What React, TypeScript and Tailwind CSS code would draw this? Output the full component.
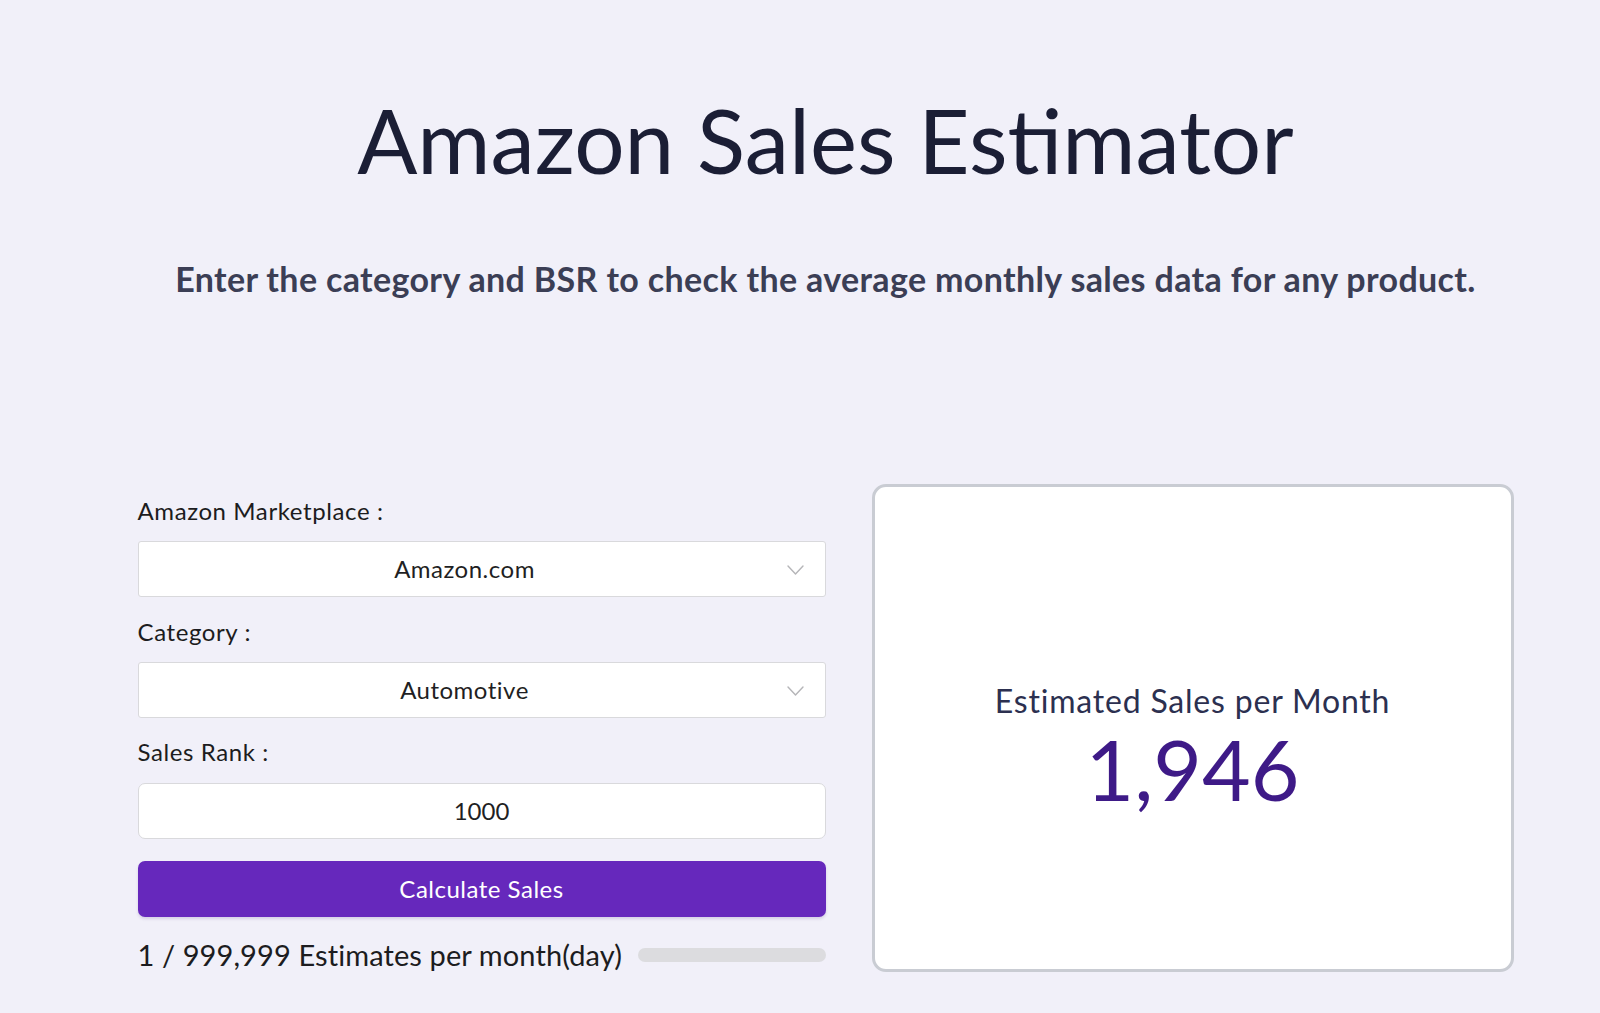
import React from "react";

const font = { fontFamily: "Lato, 'Open Sans', sans-serif" };

function Chevron() {
  return (
    <svg width="17" height="10" viewBox="0 0 17 10" fill="none">
      <path d="M1 1 L8.5 9 L16 1" stroke="#b5b5b8" strokeWidth="1.4" strokeLinecap="round" strokeLinejoin="round" />
    </svg>
  );
}

function SelectBox({ value }: { value: string }) {
  return (
    <div className="relative flex h-[56px] items-center rounded-[3px] border border-[#d9d9dc] bg-white pl-[11px] pr-[45px]">
      <span className="flex-1 text-center text-[24px] leading-none tracking-[0.5px] text-[#1f1f23]">{value}</span>
      <span className="absolute right-[21px] top-[23px]">
        <Chevron />
      </span>
    </div>
  );
}

export default function App() {
  return (
    <div className="min-h-[1013px] bg-[#f1f0f9] pl-[51px]" style={font}>
      <div className="mx-auto w-[1376px]">
        <h1 className="pt-[95px] text-center text-[89px] font-normal leading-none text-[#1b1e35]">
          Amazon Sales Estimator
        </h1>
        <p className="mt-[78px] text-center text-[34px] font-bold leading-none tracking-[0.35px] text-[#3b3e55]">
          Enter the category and BSR to check the average monthly sales data for any product.
        </p>

        <div className="mt-[188px] flex items-start gap-[46px]">
          <div className="flex w-[688px] flex-col pt-[15px]">
            <label className="mb-[18px] text-[24px] leading-none tracking-[0.6px] text-[#1c1c20]">Amazon Marketplace :</label>
            <SelectBox value="Amazon.com" />

            <label className="mb-[18px] mt-[23px] text-[24px] leading-none tracking-[0.6px] text-[#1c1c20]">Category :</label>
            <SelectBox value="Automotive" />

            <label className="mb-[19px] mt-[22px] text-[24px] leading-none tracking-[0.6px] text-[#1c1c20]">Sales Rank :</label>
            <div className="flex h-[56px] items-center justify-center rounded-[7px] border border-[#d9d9dc] bg-white">
              <span className="text-[24px] leading-none text-[#1f1f23]">1000</span>
            </div>

            <button className="mt-[22px] flex h-[56px] items-center justify-center rounded-[7px] bg-[#6628bc] text-[24px] leading-none tracking-[0.5px] text-white shadow-[0_2px_3px_rgba(60,30,120,0.15)]">
              Calculate Sales
            </button>

            <div className="mt-[23px] flex items-center gap-[16px]">
              <span className="whitespace-nowrap text-[29px] leading-none tracking-[0.1px] text-[#1c1c20]">
                1 / 999,999 Estimates per month(day)
              </span>
              <div className="h-[14px] flex-1 rounded-full bg-[#dcdcdf]" />
            </div>
          </div>

          <div className="flex h-[488px] w-[642px] flex-col items-center rounded-[14px] border-[3px] border-[#c9ccd3] bg-white pt-[198px]">
            <div className="text-[32px] leading-none tracking-[0.8px] text-[#2c3050]">Estimated Sales per Month</div>
            <div className="mt-[10px] text-[84px] leading-none text-[#3e1a87]">1,946</div>
          </div>
        </div>
      </div>
    </div>
  );
}
